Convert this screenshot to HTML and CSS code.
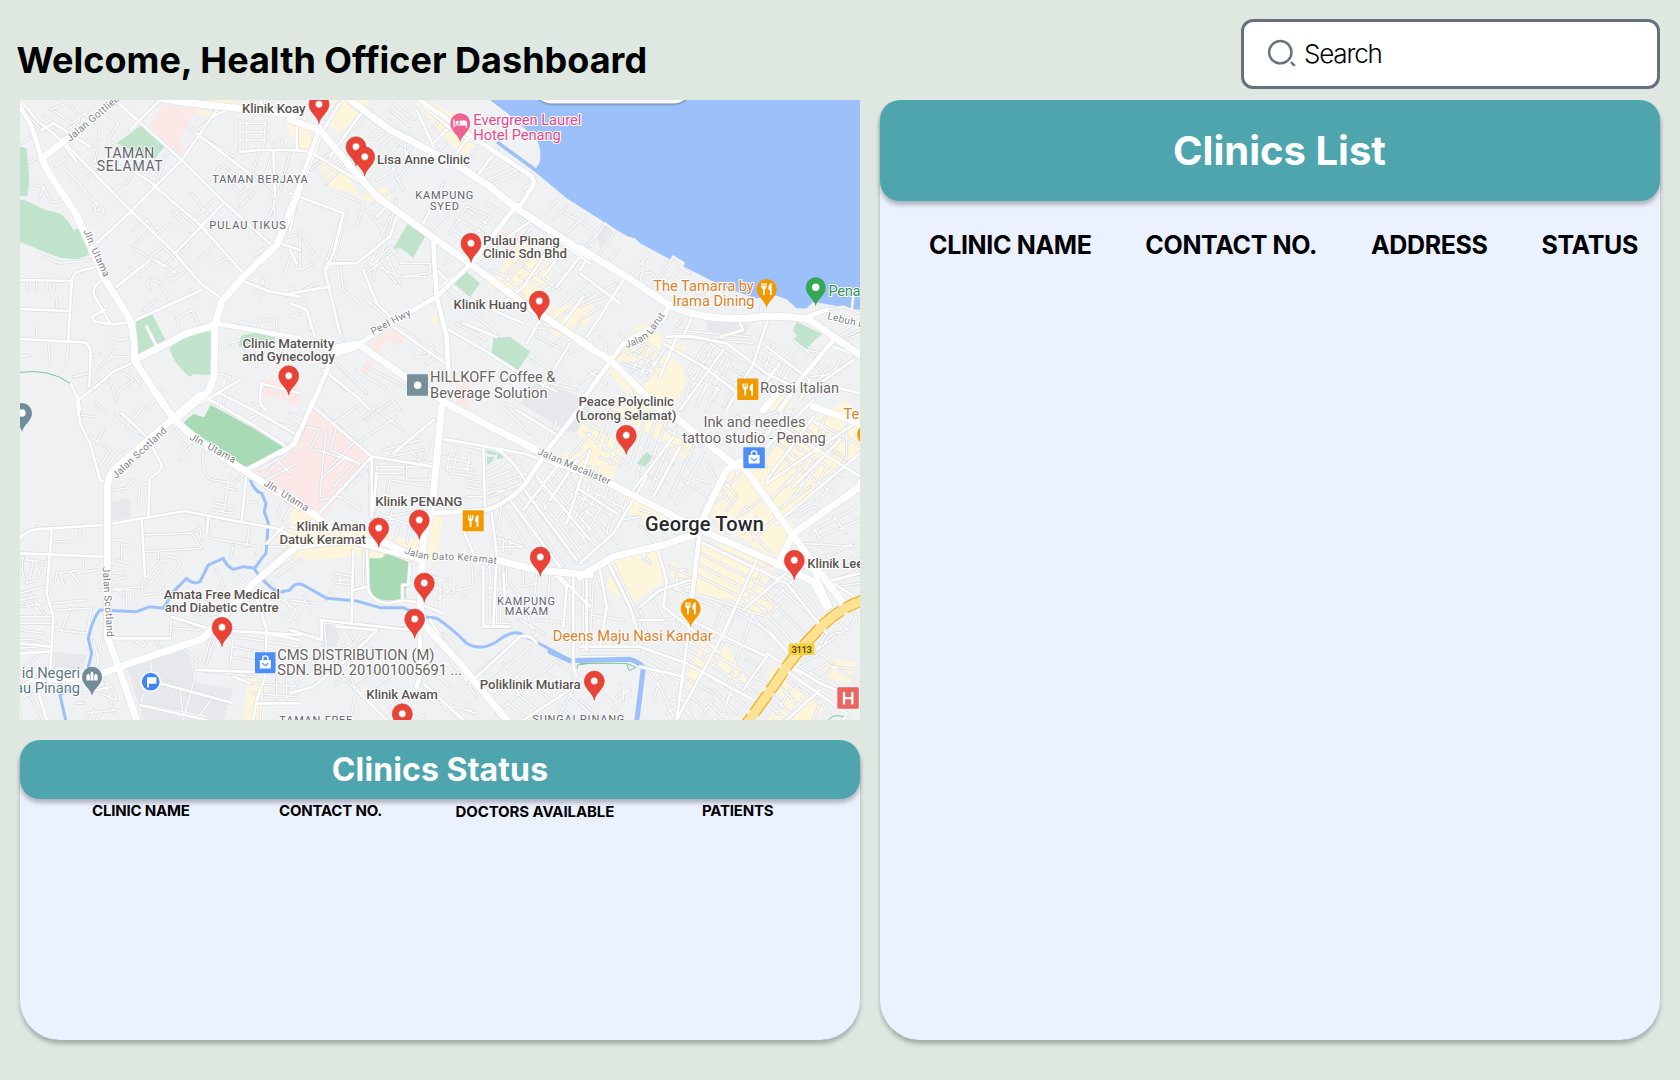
FILE: index.html
```html
<!DOCTYPE html>
<html lang="en">
<head>
<meta charset="utf-8">
<title>Health Officer Dashboard</title>
<link rel="stylesheet" href="styles.css">
</head>
<body>
<div class="dashboard">
  <header class="topbar">
    <h1 class="title">Welcome, Health Officer Dashboard</h1>
    <div class="search">
      <svg class="search-icon" viewBox="0 0 30 30" width="30" height="30"><circle cx="13.3" cy="13.2" r="11.2"/><path d="M23.9 23.1l4 3.7"/></svg>
      <span class="search-text">Search</span>
    </div>
  </header>
  <main class="content">
    <div class="left">
      <svg class="map" viewBox="20 100 840 620" width="840" height="620">
        <defs>
          <g id="pin"><path d="M0 19.3C-1.2 11.5-10 8.5-10 0A10 10 0 0 1 10 0C10 8.500 1.200 11.500 0 19.300Z"/></g>
          <g id="dotpin"><use href="#pin"/><circle r="3.700" class="wh"/></g>
          <g id="fork"><path class="wh" d="M-5.500-6v3.800q0 2 1.800 2.300V6h1.800V.1q1.800-.3 1.800-2.300V-6h-1.200v3.600h-.9V-6h-1.100v3.600h-.9V-6zM5-6Q1.700-5 1.700-1.500V1H3.200V6H5z"/></g>
          <g id="bag"><path class="wh" d="M-5.500-2.500h11V6h-11z"/><path d="M-2.600-2.500V-4a2.600 2.600 0 0 1 5.200 0v1.500" fill="none" stroke="#fff" stroke-width="1.400"/><path d="M-2.800 0.500q2.800 4.600 5.600 0" fill="none" stroke="#4d8df6" stroke-width="1.300"/></g>

          <g id="lanes">
            <g class="ta"><path d="M70 60L125 120M135 80L190 130L240 90L215 50M165 65L215 100L280 50M150 60L200 40M250 70L300 110L295 150M320 70L355 100L325 150L360 175M260 150L290 185L285 215L250 230M165 230L205 200M85 220L120 200M65 160L100 135M105 285L130 290L120 320M130 290L150 330Q165 345 190 325M190 230L240 285L275 250M240 285L290 345Q275 370 300 375Q320 365 305 350L285 335M340 300L365 285M470 280L500 190L530 180M380 280L400 240M470 430L510 400M400 420L440 390L470 430M400 470L450 420M450 500L490 470L520 500L490 530ZM470 510L530 550M500 560L540 530M515 570L555 545M545 485L570 460M600 505L640 470M645 525L680 505L700 525M575 310L610 360L640 330M520 370L570 425M545 370L600 420M590 380L610 360L630 380M650 240L720 310L750 290L670 225ZM720 350L760 310L700 250M760 500L790 475L775 520M850 560L875 490L850 460M765 600L790 570L780 630M865 440L890 435M450 600L440 580Q455 560 480 580L515 640M540 720L530 685L575 660L600 710M430 660L470 630M570 600L590 620M135 500L180 520L270 510M390 535L420 560M410 480L455 510L440 535M80 575L85 600M110 575L110 600M140 578L142 600M160 578L162 600M170 630V660M110 715V750M145 752L150 820M205 750L200 820M60 797L90 797M335 740Q360 760 395 740M340 780L330 810M300 830L330 800L400 800M295 840Q280 880 320 875M330 870L350 930M370 850L400 870L350 910M390 840L420 880M440 960L490 900M220 860L270 850M280 800L300 790M650 850L690 860L680 900L640 950M675 900L670 950M770 720L780 690L830 690V725M690 760L720 750L735 780M765 800L770 830M870 680L900 670M850 755L840 790M720 90V180M740 95V180M720 100H800M720 125H800M720 150H800M800 50L790 180M820 180V160M850 180L845 150M780 180L760 240M820 180L790 270M870 190L840 300L800 400L770 430M750 240L820 320L825 380M580 130L640 80M590 130L700 200L720 180M560 100L600 140"/></g>
            <g class="tb"><path d="M60 240L130 180L240 60M100 260L170 200M110 280L200 190M150 30L110 90M240 140L300 90M250 150L320 110M270 170L330 120M300 190L350 130L380 150L310 240ZM330 170L370 210L320 270M345 160L350 230M260 270L310 240L340 300M400 400L460 280M425 420L520 330M480 430L530 350L600 380L530 460M490 420L560 460M510 390L580 430M530 360L590 400M440 190L470 160M390 160L450 90M480 210L540 260M560 250L650 210M590 270L680 230M610 280L690 250M700 300L730 270L720 260M770 370L800 330M790 390L830 350M820 370L870 390L830 430M680 380L720 420L670 480M700 440L740 400M640 470L680 430M460 520L490 480L510 500M240 530L300 470L340 520M230 550L320 480M250 570L260 510L320 580M290 500L330 580M260 480L240 520L330 560M330 520L420 520V550L330 560M340 560L410 560M30 420V540L70 520M0 590L50 650L60 720M20 610L80 580M40 450L80 500M160 370L100 540L160 750M150 520L160 600L210 640M170 360L130 520M220 620L310 700L480 820M460 600L620 730M600 540L650 560L700 620M640 560L720 480L760 510M620 600L720 500M650 620L800 500M690 560L780 600M700 530L830 610M720 640L860 520M780 670L890 580M800 690L900 610M760 700L850 740M770 720Q730 700 740 740L840 790M800 760L870 700M500 700L590 750M720 800L840 880M700 860L860 900M720 860L760 890L800 830M320 330L280 480L220 540M300 380L260 470M230 360L280 420M310 300L250 340M130 300L220 340L200 410M400 790L430 770M380 800L420 800L400 770M410 820L440 800M200 840L280 890L330 960M230 830L380 910M140 820L230 910M120 860L170 900M590 340L640 370M560 180L520 230M300 60L360 110M310 40L370 90M680 760L730 800"/></g>
            <g class="tc"><path d="M0 390L50 430L20 470M30 470L75 400L105 425L60 490M90 510L115 480M150 560L205 495M180 580L190 520M220 590L280 500L310 520M250 600L300 530L330 550M180 560Q210 530 230 570M330 600L360 590L380 640M350 610L380 600M290 710L330 650M20 630L110 580M0 650L120 600M0 690L60 650M60 740Q100 780 60 790M20 840L80 880M0 880Q50 830 70 850M120 730L140 760L170 740M140 790L200 760L240 790M130 820L200 850L260 770M150 850L200 770M180 860L220 780M200 870L250 780M160 790L240 830M150 820L230 850M130 760L180 790M260 740L520 760M280 720L510 740M260 770L420 850M320 850L380 760M340 870L400 770M370 910L440 790M400 930L450 810M430 950L480 860M330 860L420 900M350 820L480 890M380 790L500 860M390 760L540 850M540 740L640 800M520 790L640 880M530 830L620 900M540 770L660 850M580 770L550 850M620 810L580 890M640 820L610 870M640 750L700 800L740 830M680 780L730 790M700 820L740 860M800 740L840 720M760 740L840 690M780 760L840 730M690 860L780 850M660 870L840 910M690 880L820 810M740 880L780 810M730 660L790 650L840 670M540 650L545 670M310 960L330 880M350 950L380 880M380 960L410 890M560 950L590 900M590 960L640 900M820 620L815 660"/></g>
            <g class="td"><path d="M240 45L280 50M290 10L310 30M345 40L400 90L440 110M380 80L430 20M270 110L330 150L300 200M290 130L310 90M320 200L360 150L390 170M340 270L380 265L400 240M415 310L420 255L445 250M540 180L575 135M520 90L560 140M610 150Q600 230 640 240L700 250Q730 230 740 210M690 220L670 340M640 330L700 340M650 310L700 320M670 260L710 270M730 310L770 305M620 350L630 415L780 440L770 460M700 440L690 475M750 370L740 440M430 405L575 400L605 445L430 455M570 400L600 385L605 420M475 455V475M425 550L490 475Q530 460 540 495L470 580L430 585ZM440 560L500 490M110 380L160 385M155 425H210M240 385V410M335 420H365V475M365 435H390M350 480L385 490M90 460L80 480L130 485L110 540L80 550M100 480L90 540M250 470V510L170 520L165 545M180 520L190 550M210 515L240 550M230 520L290 510M340 540L380 530M345 520H370M340 570H400V590M350 560L370 590M380 570V620M60 580L130 560M60 600L110 590M65 620L130 610M70 600L110 650M90 580L140 650M60 650H160M60 670H170M160 610L260 600M170 630L275 625L260 700L170 690M185 690L210 625M60 690L130 700M60 720Q110 710 150 740M60 745L120 740M60 820L110 770M70 800L120 840M60 900L150 840M80 870L130 960M60 920L60 960M310 700L290 800M280 720L300 800M355 715L510 715L515 650M400 720L430 740L440 720M470 720L480 750M515 650L640 700M520 685L600 690M580 640Q640 650 650 640M650 700L620 790M630 720L610 790M700 710L690 800M640 700L900 740M695 740L800 760M690 770L800 790M590 810L760 830M550 750L590 780L580 850L550 960M700 810L740 830M750 850L890 860M760 880L890 890M830 830V900M860 830V900M790 840L780 960M450 780L455 810M430 880L420 930M480 850L640 890M540 870L550 950M470 920L620 950M640 890L590 960M300 830Q340 850 350 900L300 880M250 880L330 860M320 850L340 940M260 940L350 930M270 960L280 930M290 960L300 940M230 910L250 910M420 560L300 570M700 520L750 560M650 510L670 560L620 600M800 540L850 590L890 660M740 580L790 650M820 580L900 640M850 640L870 665M810 490L860 450M820 510L880 470M830 530L900 480M800 440L860 440M830 350L850 300M850 360L880 310M800 60L870 80M740 60L800 30L760 10M780 210L830 180M790 230L870 150M800 240L890 190M830 180L870 220M70 470Q60 520 80 550"/></g>
            <g class="te"><path d="M80 20L240 165M0 60L40 90L20 130M50 80L90 90L60 150M110 90L100 170L90 290M140 80L120 150L210 190M190 130L120 200M80 150L210 190M100 230L170 170L230 210M130 260L190 200M170 270L210 230M90 300L150 290L210 330M130 70L200 20M160 100L260 20M200 130L320 50M260 30L340 90M230 60L310 0M250 180L430 190M260 200H340V220H260ZM350 200H420V240H350ZM290 290L300 240L360 250L420 260M280 150L390 120M300 170L400 150M350 140L380 170M420 130L400 180M440 130V190M450 120L580 150M460 170L540 190M470 200L550 210M480 220L560 230M480 160L470 210M500 160L490 220M540 160L530 220M580 150V330M530 240L580 250M530 260L580 270M530 290H580M590 220L670 170M590 240L690 200M600 260L710 220M600 290L720 240M690 200L690 260M660 170L720 240M590 280L640 270M640 290L620 400M610 410L700 440M620 420V450M640 415V455M660 420V460M615 440H700M240 170V350L310 370M260 340L380 380M310 300L300 370M330 370L310 430M360 380L350 430M290 350L400 330M700 270L860 490M720 260L890 480M740 240L900 440M760 220L900 390M780 210L900 350M680 290L820 500M660 300L790 500M640 330L740 480M800 190L900 310M720 310L820 190M760 330L870 180M800 360L900 200M840 390L900 260M840 170L900 100M860 190L900 150M530 400L545 480L550 560L500 570M580 490V680H660M600 490V670M620 500V670M640 500L630 680M580 590H640M580 560L640 570M650 500V560M660 550L700 600L730 700M700 510V560L740 550M780 520L770 660M740 520L730 620M740 660L850 670L840 700M690 660L760 700M600 670H660M570 520L600 500M430 530L460 540M430 560L490 580M440 600L480 570V540L430 545M450 540V630M400 620L450 630M190 450V580M220 450V560L190 570M130 520L190 530M130 540H190M140 550L190 555M150 520V550M130 560L110 600M0 600L80 610M20 620L0 660M40 590L60 640M100 660L110 740L90 780M0 690L90 710M100 670L360 685M260 690L180 740L0 800M140 680L160 730M170 680L190 720M0 870L90 780M160 790L230 740L270 760M130 810L200 870L280 950M190 870L250 820M140 850L180 830L200 870L180 960M240 870L300 830M420 680L460 720L440 740M460 700L500 750M480 780L560 890M400 850L510 960M410 800L480 860M430 870L470 930M420 900L560 940M500 880L480 920M530 910L550 940M540 840L690 710L740 720M570 870L720 740M600 900L760 760M620 940L800 780M650 910L720 960M680 880L780 960M720 850L860 960M760 810L900 940M640 790L700 850M620 830L690 880M800 780L830 810M840 800L860 850L800 960M280 950L340 880M360 930L400 950M300 870L330 910M500 560L520 590M0 40L40 60M640 20L720 100M650 10L800 100M780 120L800 60"/></g>
            <g class="tf"><path d="M90 30L50 130M110 40L70 150M140 40L90 190M200 40L150 200M230 50L170 230M260 60L190 250M290 80L210 270M320 100L230 280M350 120L270 290M370 160L290 310M20 100L150 200M0 60L80 100M60 170L120 200M180 220L260 250M220 160L280 190M240 120L330 160M260 90L360 140M310 240L400 300M330 230L390 250M380 190L450 310M20 190L0 230M50 200L20 270M90 250L60 330L0 430M60 270L0 370M110 270L80 400M140 290L120 380M0 290L100 350M20 330L110 430M0 400L80 460M30 270L140 330M0 350L60 420M180 330L210 340M180 380L240 440M240 370L260 430M260 340L300 420M120 360L180 350M430 290L370 330M430 240L470 290L440 330M440 260L480 220M490 370L590 480M400 360L450 400M440 400L500 320M490 400L530 350M520 420L590 350M540 300L490 340M560 310L640 230M580 340L690 260M600 360L700 300M650 350L700 320L740 350M540 200L620 80M570 230L680 80M620 260L740 100M640 290L780 110M580 120L660 180M600 70L760 160M640 30L790 120M530 80L590 120M470 50L520 70M510 150L560 200M530 60L600 30M560 90L630 50M620 180L760 280M650 140L790 230M680 90L800 180M700 60L830 130M720 250L800 180M700 180L660 260M740 200L700 280M770 230L720 300M800 50V180M740 40L710 120M640 420L750 500M660 430L840 440M690 400L830 320M720 410L840 360M740 470L840 420M750 520L840 460M760 540L840 510M770 560L840 550M700 380L760 500M760 350L800 400M355 420L620 540M360 460L560 560M350 490L560 600M340 520L560 630M280 560L560 650M270 500L340 530M290 520V560L330 550M300 510L320 510M560 490L490 620M590 510L680 590L730 650M570 540L700 650M560 590L680 710M540 620L660 750M500 630L640 780M560 580L600 530M610 600L560 650M640 540L580 600M430 620L370 770M470 620L400 800M520 640L440 860M330 680L560 770M320 720L430 780L560 850M310 740L530 880M300 760L500 920M310 830L400 880M300 860L380 930M180 780L300 840M200 760L310 830M170 660L250 660L330 650M180 630L200 700L180 740M220 600L240 650L270 690L360 720M250 570L300 680M270 560L400 620M250 540L340 540M0 600H40M0 640L130 660M10 540V750M50 520L80 600L70 680M40 540L30 740M100 490L180 660V740M100 490Q80 500 100 530L140 610M0 750L180 750M0 770H110M180 620L260 560M180 740L300 780M200 810L240 860L280 950M220 800L280 850M240 840L220 900M190 480V460L210 490M440 620L560 690L620 750M560 680L660 800L720 840M640 800L720 760L760 790M660 840L740 790L840 850M700 860L760 800L840 810M620 840L720 910L700 960M600 860L660 920M580 890L640 950M560 910L620 960M640 850L590 940M680 880L620 960M720 900L760 960M740 840L830 900M730 740Q750 690 790 700M740 700L710 750L770 710M760 640L800 690L830 650M820 620L830 660M500 780Q540 790 540 820L500 870M480 820L440 900M460 860L430 940M120 850L150 890M110 890L150 870M130 870V900M0 900L60 950M60 870L110 930M290 880L330 940M270 900L330 900M260 940L300 910L340 960M380 900L430 950M400 870L470 940M370 940L400 900M440 940L400 960"/></g>
          </g>

          <g id="streets">
            <g class="ta"><path d="M60 30L110 90L190 155L390 360L525 490L600 578L670 630M345 30L545 210L670 335L820 470M480 30L390 120M650 60L545 210L395 362L290 460M460 285L600 405L735 555M670 340L525 490M395 240L465 285M60 570L215 573M60 657L210 663M60 747L250 757Q270 765 272 790L268 890M215 573L205 750M310 525L240 543Q215 550 215 580M310 570Q270 590 285 620L330 700M395 695L340 703L285 695L275 680L315 660M395 695L605 600M350 590L450 510M405 815L340 845L300 880L235 930L240 960M212 880L235 930M60 40L95 110L125 205M720 185L780 180H900M680 60L640 80M590 130L760 260M820 180L825 320M440 710L470 770M735 575L810 605L900 620M840 460L900 480M780 880L900 910M785 885Q770 950 800 960M780 35L800 60M890 90V180M830 745L900 760M180 150L230 215M125 120L160 100L270 170"/></g>
            <g class="tb"><path d="M0 180L60 185L250 300M0 480L20 520M0 310L160 370L130 490L105 545L150 730M110 520L200 520L300 440L320 380M0 610L120 590M310 710L480 830M440 540L500 600M540 630L700 700M0 640L50 660L75 740M150 40L100 120L20 330L0 420M400 50L500 130L560 160M180 40L260 100M220 60L120 200M380 60L440 190M620 180L560 260M690 370L900 520M540 520L440 600M620 740L520 700M100 840L200 920L240 960M460 710L590 785L690 850L800 905M840 760L760 890M400 400L420 360M430 160L470 120M500 190L550 120M740 380L600 480L530 540M800 440L700 590L640 640M830 470L760 560M870 500L800 590M220 540L260 640L310 690M260 380L300 340M750 690L710 760M880 620L820 700"/></g>
            <g class="tc"><path d="M565 685L520 820L440 960M0 550L120 640M130 570L60 680L20 740M260 740H340L440 760L560 850L660 900M90 820L150 750L250 690M430 780L300 960M250 760L370 830L500 930M240 860L290 740M480 700L490 720L420 740M600 820L540 900M840 800L760 770M760 890L840 910M150 900L180 960M560 770L690 870L660 930M340 670L310 740M30 490L0 540M820 810L690 900"/></g>
            <g class="td"><path d="M230 0L240 70L270 130L300 240L320 250M60 415Q80 390 110 388L310 375M340 370L555 333L690 360L830 385L880 410M365 40L440 110L485 195Q490 210 450 235L445 345M425 360L435 530M60 460L310 470M155 390L140 580L160 650L150 820M600 -10L640 5L765 78L865 143M600 10L720 -60M625 350L620 400M740 215L725 360M335 715H510M590 810L900 820M420 915L620 960M480 850L590 880L700 910M760 560L800 690L795 830L770 900L760 960M515 650L640 690L900 705M60 760L150 755M60 835Q100 830 110 860L140 960M60 860L100 840L240 850M800 700L900 720M700 830L750 850M770 910L900 910M800 430L850 380M60 730L150 740M660 -20L760 30L900 110"/></g>
            <g class="te"><path d="M70 20L245 170L430 200M245 170L60 370L90 345M450 115L700 160L900 230M245 175V350M580 140L585 330M590 140Q650 145 710 250M520 390L550 460M605 340L620 460L610 680M700 265L860 480M660 300L810 500M740 230L900 420M800 200L700 330M860 180L780 300M900 150L830 370M190 450L185 665M235 560L190 570M230 440L235 570Q250 610 300 610Q340 595 400 610M360 490L355 555H337V595M90 660L360 690M380 610L460 640M95 660V720L0 690M0 450L60 440L240 420M850 520V800L860 830M660 680H580V500M790 520L830 560L820 680M640 520L645 600M420 660L530 840M870 850L700 960M540 850L690 710Q720 700 740 730M140 680L260 690L180 770L70 860L0 880M200 870L290 960M680 30L810 110M310 160L430 60M400 850L520 960M0 380L60 390M260 220L250 330M800 520L900 620"/></g>
            <g class="tf"><path d="M450 190L370 330M470 220L600 50L620 0M600 80L840 230M520 180L700 0M560 250L840 60M590 370L840 160M640 400L840 260M350 420L620 550L740 700M490 630L640 500M530 480L430 700L290 960M360 380L330 660L290 960M80 480L150 620L180 720M180 620L240 570L330 540M0 740L180 740L320 790L520 900M330 660L560 770L490 870M390 400L590 500M200 230L100 400L0 490M0 270L110 340M280 110L160 270M300 140L220 290M720 550L840 520M20 540V750M60 510L80 620L60 740M600 800L800 940L790 960M560 760L660 820M250 660L180 660M180 800L310 830L300 880M640 800L720 850L840 900M720 870L620 960M230 440L260 540L250 620L350 700L420 760M110 470L200 440M760 550L840 600M640 260L780 120M700 50L560 240"/></g>
          </g>

          <g id="roads">
            <g class="ta"><path d="M650 700L900 745M395 690L405 810M50 30L95 110L125 205"/></g>
            <g class="tb"><path d="M90 110L20 310L-10 380M180 30L300 120L500 220L600 290L680 350M390 30L560 150L720 255Q740 270 720 300L690 350M680 345L545 520L440 620L370 660L210 760M120 820L60 960M430 460L440 620L470 740L475 850"/></g>
            <g class="tc"><path d="M265 650L250 690L130 760L0 940M840 800L760 740L680 680L740 660M760 750L660 870L600 960"/></g>
            <g class="td"><path d="M900 90L880 135L740 210"/></g>
            <g class="te"><path d="M70 0L15 130L-30 160M200 430L390 480M890 0L780 140L700 260Q650 310 590 330L420 340M380 860L390 830V710"/></g>
            <g class="tf"><path d="M850 230L820 280L640 400L590 500M640 480L700 510L750 620M360 390L330 640"/></g>
          </g>

          <g id="arterials">
            <g class="ta"><path d="M200 148L125 205L150 255L230 375L310 560L385 680Q405 720 403 810L490 945L530 990M405 810L560 730L645 705L665 635L730 560L830 465L870 370L900 290M645 705L642 860L625 905L530 985M480 25L560 38L900 75"/></g>
            <g class="tb"><path d="M0 90L90 120L170 215L260 320L440 450L545 525L700 640L900 770M180 30L300 120L500 225L600 290L680 355L900 500M135 790L210 765L330 850L470 940M210 760L130 775"/></g>
            <g class="tc"><path d="M0 475L140 560L260 640Q340 690 500 685Q600 670 690 690L840 795M0 755L90 810L190 910L240 960"/></g>
            <g class="td"><path d="M470 -20L520 55L590 120L730 210L900 320M600 -15L520 55L340 210Q322 230 322 270V710L355 800L410 960M900 430L760 550L610 715L360 800L280 830L150 840"/></g>
            <g class="te"><path d="M455 20L440 180L425 330L400 420L390 620L400 670L500 780L650 960M470 10L600 80L740 150M0 290L80 350L120 390M200 420L290 430L350 460M620 480L740 510L900 525"/></g>
            <g class="tf"><path d="M90 250L350 385L590 490L700 545L740 620M0 530L100 470L250 435L350 400L400 290L440 210L480 185L620 380L700 490L790 610M270 40L470 200M640 400L840 260M640 400L595 490M700 20L840 70M550 30L600 -30"/></g>
          </g>

          <path id="r1" d="M70 142L136 86"/>
          <path id="r2" d="M83.300 231L91 249L106 282"/>
          <path id="r3" d="M373 335L415 313"/>
          <path id="r4" d="M626 348Q642 344 652 334Q658 325 668 311"/>
          <path id="r5" d="M827 319L885 333"/>
          <path id="r6" d="M116 479L169 430"/>
          <path id="r7" d="M189 439L246 470"/>
          <path id="r8" d="M263 485L318 519"/>
          <path id="r9" d="M102.500 567L107 637"/>
          <path id="r10" d="M537 454L616 488"/>
          <path id="r11" d="M404 553Q420 560 440 560Q475 560 502 565"/>
        </defs>

        <rect class="land" x="20" y="100" width="840" height="620"/>

        <g class="built">
          <path class="tb" d="M690 940L740 870L900 930V1010L840 1030ZM95 1600L150 1610L140 1670H95Z"/>
          <path class="tc" d="M380 690L510 700L490 745L380 720ZM50 430L75 400L100 420L60 475Z"/>
          <path class="td" d="M335 305L390 293L393 350L335 362ZM160 755L258 765L250 810L165 800ZM380 800L560 750L590 850L700 865L670 960H430Z"/>
          <path class="tf" d="M450 320L490 350L430 410L470 350Z"/>
        </g>
        <g class="yellow">
          <path class="ta" d="M515 30H700V42H560ZM590 58L675 75H600ZM860 85H885L880 135L862 130Z"/>
          <path class="tb" d="M130 30H240L190 90L150 130L110 100ZM0 60L40 60L70 170L120 230L60 210L0 130ZM100 210L170 250L210 320L290 290L310 320L260 345L160 300L130 300L90 250ZM370 30L430 40L520 90L560 160L520 200L470 150ZM650 480L690 460L800 510L780 560L740 640L590 590L640 530ZM750 690L780 650L900 640V700L800 740ZM420 690L440 660L440 720Z"/>
          <path class="tc" d="M170 710L200 700L250 745L230 800L180 820L110 810ZM260 790L310 830L320 880L270 960H180L200 860ZM260 755L320 765L310 795ZM80 840L130 840L190 910L160 930ZM0 640L30 620L40 650L0 680ZM570 960L600 915L640 940L620 960Z"/>
          <path class="td" d="M745 830L800 845L790 960H730ZM845 290L900 300V340ZM830 390L900 430V480L860 470Z"/>
          <path class="te" d="M0 310L60 340L130 380L250 400L380 420L400 370L460 320L440 490L390 480L340 490L200 470L60 480L0 450ZM820 160L900 150V250L820 210ZM860 100L890 40L900 60V140Z"/>
          <path class="tf" d="M0 130L60 70L130 150L90 250L40 230ZM90 30L170 20L350 150L320 180L240 120ZM130 280L300 350L240 380L130 330ZM100 480L230 440L260 540L150 615L80 560ZM440 210L550 190L620 80L700 60L800 0L840 60V150L690 300L620 350L660 400L600 490L400 360L380 310ZM360 430L460 440L590 500L550 560L600 620L560 660L460 600L280 570L270 480L330 520ZM370 720L440 740L500 840L470 860L400 780L330 870L320 830ZM740 770L830 790L810 850L730 830ZM560 820L610 790L640 860L740 920L700 960H560L610 900Z"/>
        </g>
        <g class="pink">
          <path class="ta" d="M490 42L595 60L565 95L540 150L555 180L540 195L448 110ZM790 868L900 880V945L840 925L785 920Z"/>
          <path class="tb" d="M225 770L310 710L350 730L330 770L290 750L260 800ZM210 850L230 810L250 820L230 855ZM0 890L25 900V945H0ZM630 440L650 415L690 440L660 500ZM500 860L540 880L530 955L500 940Z"/>
          <path class="td" d="M760 215L900 150V320L850 280ZM850 -10L900 0V15Z"/>
          <path class="te" d="M70 20L235 170L105 350L-30 290L-20 170L15 130ZM500 0L540 0L535 30Z"/>
        </g>
        <g class="water">
          <path class="tb" d="M600 30L672 85L740 150Q755 170 750 215L738 235L625 152L618 160L740 250L830 325L980 420L1015 440L1035 445L1050 460L1140 508L1150 498L1183 515L1182 530L1300 590L1360 612L1400 625L1460 617L1490 628L1520 655L1550 655L1570 635L1710 660V30Z"/>
        </g>

        <use href="#lanes" class="lane-case"/><use href="#lanes" class="lane"/>
        <g class="green">
          <path class="ta" d="M60 170L80 175L88 270L82 318H60ZM60 328L80 332L130 358L182 372L205 395L220 420L240 412L262 465L266 495L230 508L180 503L120 480L60 455ZM350 160L425 105L497 165L462 210ZM408 690L455 670L497 750L412 792ZM508 775Q560 725 636 725L632 855L580 852L570 860Q525 830 508 775ZM725 735L770 728L835 745L715 770Z"/>
          <path class="tb" d="M355 398L408 436L370 503L332 475L310 475ZM530 545L570 580L540 622L492 580ZM610 745L660 740L720 785L683 843L605 790Z"/>
          <path class="tc" d="M650 695L727 732L705 750L680 777L643 750L650 735L638 722Z"/>
          <path class="te" d="M583 150L600 152L620 158L618 165L595 163ZM625 152L645 160L638 175L620 178ZM590 170L612 172L608 182L592 195ZM345 555L350 595H342Z"/>
          <path class="tf" d="M170 190L200 155L217 172L195 200Z"/>
        </g>
        <g class="park">
          <path class="td" d="M548 70L580 42L612 52L632 15L760 85L855 145Q800 190 728 200L700 180Z"/>
          <path class="te" d="M238 475L275 475L290 460L360 488L355 560Q335 570 335 595Q270 615 238 575Z"/>
        </g>
        <g class="river">
          <path class="td" d="M752 243Q765 275 785 280L798 310L793 335L805 370L798 460Q780 480 765 505L730 500L700 508Q680 500 670 475L625 495L600 545Q580 555 560 535L520 575L490 625L450 620L410 635L300 630Q280 650 265 715L275 760L265 800M240 850L180 885L198 965"/>
          <path class="te" d="M-105 510Q-60 570 -30 577L0 570Q15 545 40 555L110 595L200 603L270 623L340 623L400 650L440 655Q480 680 530 730Q570 755 620 725Q670 685 700 705L840 780"/>
          <path class="tf wide" d="M-90 755L-30 782L150 778Q175 785 190 802L182 870L170 965"/>
        </g>
        <use href="#streets" class="case s"/><use href="#streets" class="street"/>
        <use href="#roads" class="case r"/><use href="#arterials" class="case a"/>
        <use href="#roads" class="road"/><use href="#arterials" class="arterial"/>

        <g class="trail">
          <path class="ta" d="M60 847Q150 835 210 880"/>
          <path class="te" d="M862 805V795L900 790"/>
          <path class="tf" d="M0 790H140L168 802L148 812L140 792M745 960Q760 940 790 950"/>
        </g>
        <g class="highway">
          <path class="tf hw-edge" d="M860 597Q770 625 705 700Q640 765 590 845L490 985"/>
          <path class="tf hw" d="M860 597Q770 625 705 700Q640 765 590 845L490 985"/>
          <rect x="788.500" y="643.500" width="26" height="11.500" rx="1.500" fill="#f6d138"/>
          <text x="791.500" y="653" textLength="20.500">3113</text>
        </g>

        <rect class="pill" x="532" y="60" width="161" height="43.500" rx="20"/>

        <g class="road-name">
          <text><textPath href="#r1">Jalan Gottlieb</textPath></text>
          <text><textPath href="#r2">Jln. Utama</textPath></text>
          <text><textPath href="#r3">Peel Hwy</textPath></text>
          <text><textPath href="#r4">Jalan Larut</textPath></text>
          <text><textPath href="#r5">Lebuh Fa</textPath></text>
          <text><textPath href="#r6">Jalan Scotland</textPath></text>
          <text><textPath href="#r7">Jln. Utama</textPath></text>
          <text><textPath href="#r8">Jln. Utama</textPath></text>
          <text><textPath href="#r9">Jalan Scotland</textPath></text>
          <text><textPath href="#r10">Jalan Macalister</textPath></text>
          <text><textPath href="#r11">Jalan Dato Keramat</textPath></text>
        </g>

        <g class="area">
          <text class="big" x="104.300" y="158.300" textLength="50">TAMAN</text>
          <text class="big" x="96.700" y="171" textLength="66">SELAMAT</text>
          <text x="212.300" y="183.300" textLength="95.500">TAMAN BERJAYA</text>
          <text x="209.300" y="229" textLength="76.500">PULAU TIKUS</text>
          <text x="415.300" y="199" textLength="58">KAMPUNG</text>
          <text x="430" y="209.700" textLength="29">SYED</text>
          <text x="497" y="605" textLength="58">KAMPUNG</text>
          <text x="504.700" y="615.300" textLength="43.500">MAKAM</text>
          <text x="279.300" y="723.700" textLength="73">TAMAN FREE</text>
          <text x="532.300" y="722.700" textLength="92">SUNGAI PINANG</text>
        </g>
        <g class="clinic">
          <text x="242" y="113.300" textLength="63.500">Klinik Koay</text>
          <text x="377" y="164.300" textLength="93">Lisa Anne Clinic</text>
          <text x="483" y="244.700" textLength="76.700">Pulau Pinang</text>
          <text x="483" y="257.700" textLength="84">Clinic Sdn Bhd</text>
          <text x="453.500" y="309" textLength="73.500">Klinik Huang</text>
          <text x="242.500" y="347.700" textLength="91.700">Clinic Maternity</text>
          <text x="242" y="360.500" textLength="93">and Gynecology</text>
          <text x="578.500" y="406" textLength="95.500">Peace Polyclinic</text>
          <text x="575.500" y="420" textLength="101">(Lorong Selamat)</text>
          <text x="807.300" y="568" textLength="56">Klinik Lee</text>
          <text x="375.300" y="506" textLength="87">Klinik PENANG</text>
          <text x="296.500" y="530.500" textLength="69.300">Klinik Aman</text>
          <text x="279.500" y="543.500" textLength="86.500">Datuk Keramat</text>
          <text x="163.800" y="599" textLength="116.200">Amata Free Medical</text>
          <text x="164.700" y="612" textLength="114">and Diabetic Centre</text>
          <text x="366.300" y="699" textLength="71.500">Klinik Awam</text>
          <text x="479.700" y="689.300" textLength="101">Poliklinik Mutiara</text>
        </g>
        <g class="poi">
          <text x="473.300" y="124.500" textLength="108" class="hotel">Evergreen Laurel</text>
          <text x="473.300" y="140" textLength="87.500" class="hotel">Hotel Penang</text>
          <text x="430" y="382.300" textLength="125.500">HILLKOFF Coffee &amp;</text>
          <text x="430" y="397.700" textLength="117.500">Beverage Solution</text>
          <text x="653.300" y="290.500" textLength="100.500" class="food">The Tamarra by</text>
          <text x="672.500" y="306" textLength="82" class="food">Irama Dining</text>
          <text x="828.500" y="296" textLength="32" class="leaf">Pena</text>
          <text x="760" y="393.300" textLength="79">Rossi Italian</text>
          <text x="703.500" y="427.300" textLength="102">Ink and needles</text>
          <text x="682.300" y="443" textLength="143.500">tattoo studio - Penang</text>
          <text x="843.500" y="418.700" class="food">Te</text>
          <text x="277.300" y="659.700" textLength="157">CMS DISTRIBUTION (M)</text>
          <text x="277.300" y="675" textLength="184.500">SDN. BHD. 201001005691 ...</text>
          <text x="552.800" y="640.700" textLength="160" class="food">Deens Maju Nasi Kandar</text>
          <text x="80" y="677.700" class="civic">id Negeri</text>
          <text x="80" y="693" class="civic">au Pinang</text>
          <text x="645" y="531" textLength="119" class="city">George Town</text>
        </g>

        <g class="pins">
          <g class="slate"><use href="#dotpin" x="22" y="413"/><use href="#pin" x="92" y="676.700"/></g>
          <path class="wh" d="M86.500 680.500v-5l1.700-2 1.700 2v5zM90.500 680.500v-7q1.500-4 3 0v7zM94.200 680.500v-5l1.700-2 1.700 2v5z"/>
          <use href="#pin" x="460.300" y="123.300" fill="#f06292"/>
          <path class="wh" d="M453.300 119.500h1.300v5h5v-4h5q2.500 0 2.500 3v4h-1.300v-2h-11.200v2h-1.300z"/><circle class="wh" cx="457.200" cy="122.300" r="1.600"/>
          <g fill="#f29900"><use href="#pin" x="766.700" y="289"/><use href="#pin" x="690.700" y="608.300"/><use href="#pin" x="867.300" y="434.300"/></g>
          <use href="#fork" x="766.700" y="289"/><use href="#fork" x="690.700" y="608.300"/>
          <use href="#dotpin" x="815.700" y="287.300" fill="#34a853"/>
          <g class="red">
            <use href="#dotpin" x="319" y="104.300"/><use href="#dotpin" x="356" y="146.700"/><use href="#dotpin" x="364.700" y="156.700"/>
            <use href="#dotpin" x="471" y="243.300"/><use href="#dotpin" x="539.300" y="301"/><use href="#dotpin" x="288.700" y="375.700"/>
            <use href="#dotpin" x="626.300" y="435.300"/><use href="#dotpin" x="419.300" y="520"/><use href="#dotpin" x="378.700" y="528"/>
            <use href="#dotpin" x="540.300" y="557"/><use href="#dotpin" x="424.300" y="583"/><use href="#dotpin" x="414.700" y="619"/>
            <use href="#dotpin" x="222" y="627.300"/><use href="#dotpin" x="794.300" y="560.300"/><use href="#dotpin" x="594.300" y="681"/>
            <use href="#dotpin" x="402.300" y="713.700"/>
          </g>
          <rect x="737.300" y="378.500" width="21" height="21.500" rx="1" fill="#f29900"/><use href="#fork" x="748" y="389.500"/>
          <rect x="462.700" y="510.300" width="21" height="21" rx="1" fill="#f29900"/><use href="#fork" x="473.400" y="521"/>
          <rect x="407" y="374.300" width="21" height="21.500" rx="1" fill="#78909c"/><circle class="wh" cx="417.600" cy="385.300" r="3.700"/>
          <rect x="743.300" y="447.300" width="21.500" height="21" rx="1" fill="#4d8df6"/><use href="#bag" x="754.100" y="457.500"/>
          <rect x="255" y="652.300" width="20.500" height="21" rx="1" fill="#4d8df6"/><use href="#bag" x="265.300" y="662.500"/>
          <rect x="837.300" y="687.300" width="21.500" height="21.500" rx="1" fill="#ec6560"/><path d="M844 692v12.500M852.300 692v12.500M844 698.200h8.300" stroke="#fff" stroke-width="2.300"/>
          <circle cx="150.700" cy="681.700" r="9.600" fill="#4285f4" stroke="#fff" stroke-width="1.500"/>
          <path d="M148 687.500v-9.300h7.500v4.600h-7.500" fill="#fff" stroke="#fff" stroke-width="1.800"/>
        </g>
      </svg>

      <section class="card status">
        <h2 class="card-head">Clinics Status</h2>
        <div class="cols">
          <span class="c1">CLINIC NAME</span><span class="c2">CONTACT NO.</span><span class="c3">DOCTORS AVAILABLE</span><span class="c4">PATIENTS</span>
        </div>
      </section>
    </div>
    <section class="card list">
      <h2 class="card-head">Clinics List</h2>
      <div class="cols">
        <span>CLINIC NAME</span><span>CONTACT NO.</span><span>ADDRESS</span><span>STATUS</span>
      </div>
    </section>
  </main>
</div>
</body>
</html>
```
FILE: styles.css
```css
* { box-sizing: border-box; }
body {
  margin: 0;
  background: #dee8e0;
  font-family: Inter, "Liberation Sans", sans-serif;
  color: #000;
}
h1, h2 { margin: 0; }
.dashboard {
  width: 1680px;
  height: 1080px;
  padding: 0 20px 40px 20px;
  display: flex;
  flex-direction: column;
  overflow: hidden;
}
.topbar {
  height: 100px;
  display: flex;
  justify-content: space-between;
  align-items: flex-start;
}
.title {
  margin: 38px 0 0 -3.5px;
  font-size: 36px;
  line-height: 44px;
  font-weight: 700;
  white-space: nowrap;
}
.search {
  margin-top: 19px;
  width: 419px;
  height: 70px;
  border: 3px solid #66717c;
  border-radius: 12px;
  background: #fff;
  display: flex;
  align-items: center;
  padding-left: 23px;
  gap: 7px;
}
.search-icon { fill: none; stroke: #66727c; stroke-width: 2.4; }
.search-text { font-size: 26px; font-weight: 300; letter-spacing: -1.2px; padding-bottom: 2px; }
.content { flex: 1; display: flex; gap: 20px; }
.left { width: 840px; display: flex; flex-direction: column; gap: 20px; }
.card {
  background: #ebf1ff;
  border-radius: 20px 20px 40px 40px;
  box-shadow: 0 4px 4px rgba(0, 0, 0, .25);
}
.card-head {
  background: #4fa5ae;
  color: #fff;
  font-weight: 700;
  text-align: center;
  border-radius: 20px;
  box-shadow: 0 4px 4px rgba(0, 0, 0, .25);
}
.list { width: 780px; }
.list .card-head { height: 101px; font-size: 40px; line-height: 101px; padding-left: 19px; }
.list .cols {
  display: flex;
  justify-content: space-between;
  padding: 29px 22px 0 49px;
  font-size: 25px;
  line-height: 30px;
  font-weight: 700;
  letter-spacing: -.35px;
}
.status { flex: 1; }
.status .card-head { height: 59px; font-size: 32px; line-height: 59px; letter-spacing: .1px; }
.status .cols {
  display: grid;
  grid-template-columns: 187px 176.5px 246.5px 1fr;
  padding: 3px 0 0 72px;
  font-size: 15px;
  line-height: 18px;
  font-weight: 700;
  letter-spacing: -.2px;
}
.status .c3 { padding-top: 1px; letter-spacing: -.1px; }

.map { display: block; flex: none; font-family: Roboto, "Liberation Sans", sans-serif; }
.ta { transform: translate(0px, 90px) scale(.33333); }
.tb { transform: translate(290px, 90px) scale(.33333); }
.tc { transform: translate(580px, 90px) scale(.33333); }
.td { transform: translate(0px, 400px) scale(.33333); }
.te { transform: translate(290px, 400px) scale(.33333); }
.tf { transform: translate(580px, 400px) scale(.33333); }
.land { fill: #f0f1f3; }
.built { fill: #e6e8ec; }
.yellow { fill: #fdf5dc; }
.pink { fill: #fce8e6; }
.green { fill: #bfe3cb; }
.park { fill: #a8dab5; }
.water { fill: #9cc0f9; }
.lane-case, .lane, .case, .street, .road, .arterial, .river, .trail, .hw-edge, .hw {
  fill: none;
  stroke-linecap: round;
  stroke-linejoin: round;
}
.lane-case { stroke: #dcdee2; stroke-width: 9; }
.lane { stroke: #fafbfc; stroke-width: 4.5; }
.case { stroke: #dcdee2; }
.s { stroke-width: 12; }
.r { stroke-width: 18; }
.a { stroke-width: 24; }
.street { stroke: #fff; stroke-width: 8; }
.road { stroke: #fff; stroke-width: 14; }
.arterial { stroke: #fff; stroke-width: 21; }
.river { stroke: #9cc0f9; stroke-width: 9; }
.wide { stroke-width: 15; }
.trail { stroke: #7cc596; stroke-width: 3; }
.hw-edge { stroke: #f3b32c; stroke-width: 35; stroke-dasharray: 70 14; stroke-linecap: butt; }
.hw { stroke: #fee293; stroke-width: 27; }
.highway text { font-size: 9.5px; font-weight: 500; fill: #4d4522; }
.pill { fill: #fff; filter: drop-shadow(0 1px 1px rgba(0, 0, 0, .35)); }
.wh { fill: #fff; }
.map text { paint-order: stroke; stroke-linejoin: round; }
.road-name text { font-size: 10px; fill: #7c7f84; stroke: #fff; stroke-width: 2px; letter-spacing: .3px; }
.area text { font-size: 11px; fill: #63666b; stroke: #f8f9fa; stroke-width: 2px; font-weight: 400; }
.area .big { font-size: 14px; }
.clinic text { font-size: 13.3px; font-weight: 500; fill: #5a5450; stroke: #fff; stroke-width: 2px; }
.poi text { font-size: 14.7px; fill: #69645f; stroke: #fff; stroke-width: 2px; }
.poi .hotel { fill: #e2498a; }
.poi .food { fill: #dc8129; }
.poi .leaf { fill: #37915a; }
.poi .civic { fill: #5d7886; text-anchor: end; }
.poi .city { font-size: 20px; font-weight: 500; fill: #25282c; stroke-width: 3px; }
.red { fill: #ea4335; stroke: #c5352a; stroke-width: .5px; }
.red .wh { stroke: none; }
.slate { fill: #718b98; }
```
